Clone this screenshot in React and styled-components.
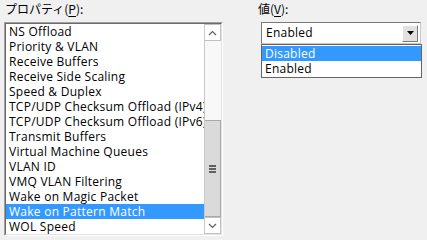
import React from 'react';
import styled, { createGlobalStyle } from 'styled-components';

const GlobalStyle = createGlobalStyle`
    html, body {
        margin: 0;
        padding: 0;
        background: #f0f0f0;
    }
    body {
        font-family: "Open Sans", "Noto Sans CJK JP", sans-serif;
        font-size: 12px;
        color: #000;
    }
`;

const Page = styled.div`
    display: flex;
    align-items: flex-start;
    gap: 34px;
    padding-left: 4px;
    width: 427px;
    height: 240px;
    box-sizing: border-box;
    overflow: hidden;
`;

const Column = styled.div`
    display: flex;
    flex-direction: column;
`;

const Label = styled.div`
    height: 22px;
    line-height: 18px;
    padding-left: ${(p) => p.$indent || 1}px;
    font-family: "Noto Sans CJK JP", sans-serif;
    font-size: 12px;
    box-sizing: border-box;
    u {
        text-underline-offset: 2px;
    }
`;

const SunkenBox = styled.div`
    border: 1px solid;
    border-color: #a0a0a0 #ffffff #ffffff #a0a0a0;
    width: ${(p) => p.$w}px;
    height: ${(p) => p.$h}px;
    box-sizing: border-box;
`;

const Inner = styled.div`
    display: flex;
    width: 100%;
    height: 100%;
    box-sizing: border-box;
    border: 1px solid;
    border-color: #696969 #e3e3e3 #e3e3e3 #696969;
    background: #fff;
    overflow: hidden;
`;

const Items = styled.div`
    flex: 1;
    display: flex;
    flex-direction: column;
    overflow: hidden;
`;

const Item = styled.div`
    height: 15px;
    line-height: 15px;
    flex-shrink: 0;
    padding-left: 3px;
    letter-spacing: 0.25px;
    white-space: nowrap;
    overflow: hidden;
    background: ${(p) => (p.$selected ? '#3399ff' : 'transparent')};
    color: ${(p) => (p.$selected ? '#fff' : '#000')};
`;

const ScrollBar = styled.div`
    width: 17px;
    display: flex;
    flex-direction: column;
    background: #f8f8f8;
    border-left: 1px solid #c8c8c8;
    box-sizing: border-box;
`;

const ArrowButton = styled.div`
    height: 17px;
    flex-shrink: 0;
    display: flex;
    align-items: center;
    justify-content: center;
    background: #fff;
    border: 1px solid #c0c0c0;
    border-left: none;
    box-sizing: border-box;
`;

const Track = styled.div`
    flex: 1;
    display: flex;
    flex-direction: column;
    justify-content: flex-end;
`;

const Thumb = styled.div`
    height: 97px;
    display: flex;
    flex-direction: column;
    align-items: center;
    justify-content: center;
    gap: 1px;
    background: #dadada;
    border: 1px solid #a8a8a8;
    border-left: none;
    box-sizing: border-box;
`;

const Grip = styled.span`
    display: block;
    width: 7px;
    height: 2px;
    background: #606060;
`;

const Combo = styled.div`
    position: relative;
    margin-left: 4px;
`;

const ComboField = styled.div`
    width: 160px;
    height: 22px;
    display: flex;
    align-items: center;
    box-sizing: border-box;
    border: 1px solid;
    border-color: #7a7a7a #c8c8c8 #c8c8c8 #7a7a7a;
    background: #fff;
    padding: 1px;
`;

const ComboText = styled.div`
    flex: 1;
    padding-left: 3px;
    line-height: 18px;
    letter-spacing: 0.25px;
`;

const DropButton = styled.div`
    width: 16px;
    height: 17px;
    margin-right: 1px;
    display: flex;
    align-items: center;
    justify-content: center;
    background: #e1e1e1;
    border: 1px solid;
    border-color: #fff #7a7a7a #7a7a7a #fff;
    box-sizing: border-box;
`;

const DropList = styled.div`
    position: absolute;
    top: 22px;
    left: 0;
    width: 161px;
    padding: 1px 0;
    background: #fff;
    border: 1px solid #646464;
    box-sizing: border-box;
    display: flex;
    flex-direction: column;
`;

const Chevron = ({ up }) => (
    <svg width="9" height="6" viewBox="0 0 9 6">
        <polyline
            points={up ? '1,5 4.5,1.5 8,5' : '1,1 4.5,4.5 8,1'}
            fill="none"
            stroke="#606060"
            strokeWidth="1.2"
        />
    </svg>
);

const properties = [
    'NS Offload',
    'Priority & VLAN',
    'Receive Buffers',
    'Receive Side Scaling',
    'Speed & Duplex',
    'TCP/UDP Checksum Offload (IPv4)',
    'TCP/UDP Checksum Offload (IPv6)',
    'Transmit Buffers',
    'Virtual Machine Queues',
    'VLAN ID',
    'VMQ VLAN Filtering',
    'Wake on Magic Packet',
    'Wake on Pattern Match',
    'WOL Speed',
];

const App = () => {
    return (
        <>
            <GlobalStyle />
            <Page>
                <Column>
                    <Label>プロパティ(<u>P</u>):</Label>
                    <SunkenBox $w={219} $h={214}>
                        <Inner>
                            <Items>
                                {properties.map((p) => (
                                    <Item key={p} $selected={p === 'Wake on Pattern Match'}>
                                        {p}
                                    </Item>
                                ))}
                            </Items>
                            <ScrollBar>
                                <ArrowButton>
                                    <Chevron up />
                                </ArrowButton>
                                <Track>
                                    <Thumb>
                                        <Grip />
                                        <Grip />
                                        <Grip />
                                    </Thumb>
                                </Track>
                                <ArrowButton>
                                    <Chevron />
                                </ArrowButton>
                            </ScrollBar>
                        </Inner>
                    </SunkenBox>
                </Column>
                <Column>
                    <Label $indent={0}>値(<u>V</u>):</Label>
                    <Combo>
                        <ComboField>
                            <ComboText>Enabled</ComboText>
                            <DropButton>
                                <svg width="7" height="4" viewBox="0 0 7 4">
                                    <polygon points="0,0 7,0 3.5,4" fill="#000" />
                                </svg>
                            </DropButton>
                        </ComboField>
                        <DropList>
                            <Item $selected>Disabled</Item>
                            <Item>Enabled</Item>
                        </DropList>
                    </Combo>
                </Column>
            </Page>
        </>
    );
};

export default App;
